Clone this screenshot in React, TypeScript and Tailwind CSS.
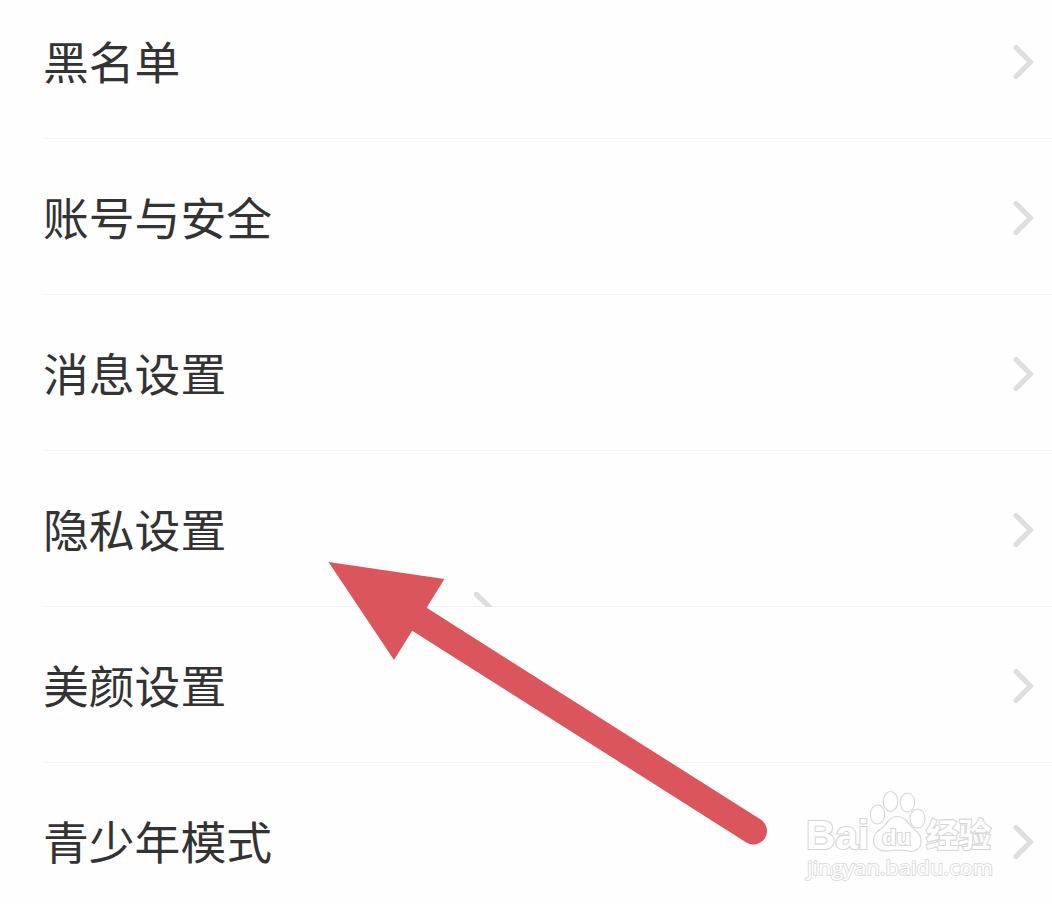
import React from "react";

const settings = [
  "黑名单",
  "账号与安全",
  "消息设置",
  "隐私设置",
  "美颜设置",
  "青少年模式",
];

const ChevronIcon: React.FC = () => (
  <svg
    className="mt-[3px]"
    width="24"
    height="40"
    viewBox="0 0 24 40"
    fill="none"
  >
    <path
      d="M4 5.500L18.5 20L4 34.500"
      stroke="#dedede"
      strokeWidth="5.2"
      strokeLinecap="round"
      strokeLinejoin="round"
    />
  </svg>
);

const SettingItem: React.FC<{ label: string }> = ({ label }) => (
  <li className="ml-[43px] flex h-[156px] items-center justify-between border-b border-[#f2f2f2] pr-4">
    <span className="pb-0.5 text-[45.8px] leading-[46px] text-[#333333]">
      {label}
    </span>
    <ChevronIcon />
  </li>
);

const PointerArrow: React.FC = () => (
  <svg
    className="absolute left-[320px] top-[550px]"
    width="460"
    height="304"
    viewBox="320 550 460 304"
    fill="none"
  >
    <path
      d="M474 593Q476 590.500 479 593L493 607H486L475 597Q473 595 474 593Z"
      fill="#dedede"
    />
    <path
      d="M419 619L753.5 831"
      stroke="#da565c"
      strokeWidth="27"
      strokeLinecap="round"
    />
    <path d="M328.500 562L444.500 579L394 660Z" fill="#da565c" />
  </svg>
);

const Watermark: React.FC = () => (
  <svg
    className="absolute left-[800px] top-[785px]"
    width="200"
    height="105"
    viewBox="800 785 200 105"
    fill="white"
    stroke="#d6d6d6"
    strokeWidth="1.1"
  >
    <g className="[font-family:'Liberation_Sans',sans-serif] font-bold">
      <text
        x="806"
        y="849"
        fontSize="40"
        textLength="63"
        lengthAdjust="spacingAndGlyphs"
        strokeWidth="2.2"
        paintOrder="stroke"
      >
        Bai
      </text>
      <ellipse cx="877.5" cy="814.5" rx="7.2" ry="9.500" />
      <ellipse cx="890.5" cy="801.5" rx="7.2" ry="10" />
      <ellipse cx="907.500" cy="802.5" rx="7.2" ry="9.500" />
      <ellipse cx="917.500" cy="818.500" rx="7.5" ry="9.500" />
      <path d="M897 816.500C906 816.500 909 825 914 829C919 833 922 837 921 843C920 850 914 852 908 851C900 849.500 893 850 888 851C881 852 874 848 873.500 841C873 834 878 831 882 828C887 824 889 816.500 897 816.500Z" />
    </g>
    <text
      x="882"
      y="845"
      fontSize="22"
      textLength="29"
      lengthAdjust="spacingAndGlyphs"
      strokeWidth="2.2"
      paintOrder="stroke"
      className="[font-family:'Liberation_Sans',sans-serif] font-bold"
    >
      du
    </text>
    <text
      x="926"
      y="847"
      fontSize="33"
      textLength="65"
      lengthAdjust="spacingAndGlyphs"
      strokeWidth="2.2"
      paintOrder="stroke"
      className="[font-family:'Noto_Sans_CJK_SC',sans-serif] font-bold"
    >
      经验
    </text>
    <text
      x="807"
      y="874.5"
      fontSize="20"
      textLength="186"
      lengthAdjust="spacingAndGlyphs"
      stroke="#dcdcdc"
      strokeWidth="1.8"
      paintOrder="stroke"
      className="[font-family:'Open_Sans','Noto_Sans',sans-serif]"
    >
      jingyan.baidu.com
    </text>
  </svg>
);

const App: React.FC = () => {
  return (
    <main className="relative h-[904px] w-full overflow-hidden bg-[#fefefe] [font-family:'Noto_Sans_CJK_SC',sans-serif]">
      <ul className="-mt-[17px]">
        {settings.map((label) => (
          <SettingItem key={label} label={label} />
        ))}
      </ul>
      <PointerArrow />
      <Watermark />
    </main>
  );
};

export default App;
